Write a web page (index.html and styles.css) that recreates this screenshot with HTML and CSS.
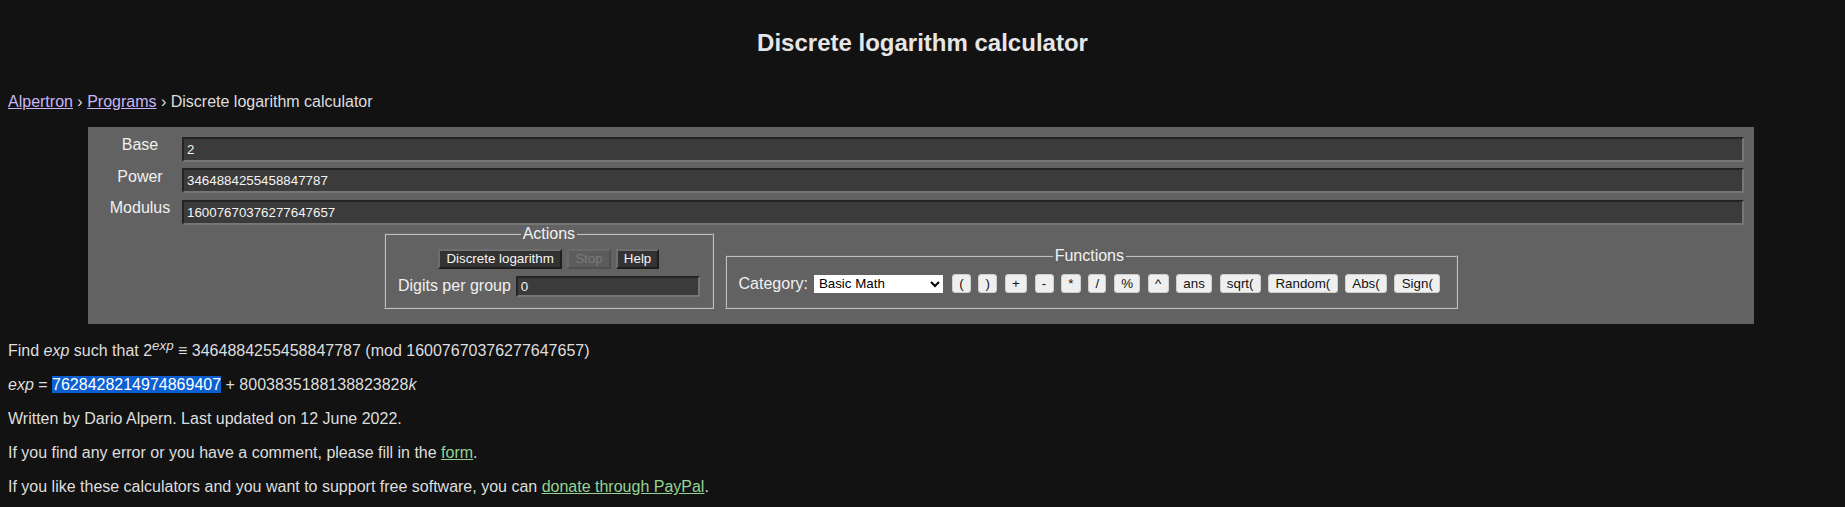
FILE: index.html
```html
<!DOCTYPE html>
<html lang="en">
<head>
<meta charset="utf-8">
<title>Discrete logarithm calculator</title>
<link rel="stylesheet" href="styles.css">
</head>
<body>
<h1 class="title">Discrete logarithm calculator</h1>
<nav class="crumbs"><a href="#">Alpertron</a> › <a href="#">Programs</a> › Discrete logarithm calculator</nav>
<form class="panel">
  <div class="fields">
    <label class="lbl" for="base">Base</label><input class="num" id="base" type="text" value="2">
    <label class="lbl" for="pow">Power</label><input class="num" id="pow" type="text" value="3464884255458847787">
    <label class="lbl" for="mod">Modulus</label><input class="num" id="mod" type="text" value="16007670376277647657">
  </div>
  <div class="boxes">
    <fieldset class="box actions">
      <legend>Actions</legend>
      <div class="act-row">
        <button type="button" class="dark">Discrete logarithm</button>
        <button type="button" class="dark" disabled>Stop</button>
        <button type="button" class="dark">Help</button>
      </div>
      <div class="digits">
        <label for="digits">Digits per group</label><input class="num small" id="digits" type="text" value="0">
      </div>
    </fieldset>
    <fieldset class="box functions">
      <legend>Functions</legend>
      <div class="fn-row">
        <label for="cat">Category:</label>
        <select id="cat" class="cat"><option>Basic Math</option></select>
        <div class="fn-buttons">
          <button type="button" class="fn">(</button>
          <button type="button" class="fn">)</button>
          <button type="button" class="fn">+</button>
          <button type="button" class="fn">-</button>
          <button type="button" class="fn">*</button>
          <button type="button" class="fn">/</button>
          <button type="button" class="fn">%</button>
          <button type="button" class="fn">^</button>
          <button type="button" class="fn">ans</button>
          <button type="button" class="fn">sqrt(</button>
          <button type="button" class="fn">Random(</button>
          <button type="button" class="fn">Abs(</button>
          <button type="button" class="fn">Sign(</button>
        </div>
      </div>
    </fieldset>
  </div>
</form>
<div class="result">
  <p class="first">Find <i>exp</i> such that 2<sup><i>exp</i></sup> ≡ 3464884255458847787 (mod 16007670376277647657)</p>
  <p><i>exp</i> = <span class="sel">7628428214974869407</span> + 8003835188138823828<i>k</i></p>
</div>
<p>Written by Dario Alpern. Last updated on 12 June 2022.</p>
<p>If you find any error or you have a comment, please fill in the <a class="green" href="#">form</a>.</p>
<p>If you like these calculators and you want to support free software, you can <a class="green" href="#">donate through PayPal</a>.</p>
</body>
</html>
```
FILE: styles.css
```css
html, body {
  background: #121212;
}
body {
  margin: 0;
  padding: 29px 8px 0;
  font-family: "Liberation Sans", Arial, sans-serif;
  font-size: 16px;
  color: #dedede;
}
.title {
  margin: 0;
  font-size: 24px;
  line-height: 27px;
  font-weight: bold;
  text-align: center;
  color: #e6e6e6;
}
.crumbs {
  margin-top: 36.5px;
  line-height: 18.4px;
}
.crumbs a {
  color: #c8b6f6;
}
.panel {
  box-sizing: border-box;
  width: 1666px;
  margin: 16px 0 0 80px;
  padding: 10px 10px 14.7px;
  background: #626262;
  color: #f0f0f0;
}
.fields {
  display: grid;
  grid-template-columns: 84px 1fr;
  row-gap: 6.5px;
}
.lbl {
  text-align: center;
  align-self: start;
  line-height: 18.4px;
  margin-top: -0.6px;
}
.num {
  box-sizing: border-box;
  height: 25px;
  margin: 0;
  padding: 0 3px;
  border: 2px solid;
  border-color: #242424 #767676 #767676 #242424;
  background: #3b3b3b;
  color: #f4f4f4;
  font-family: "Liberation Sans", Arial, sans-serif;
  font-size: 13.33px;
}
.num.small {
  width: 184px;
  height: 21px;
}
.boxes {
  display: flex;
  justify-content: center;
  align-items: flex-end;
  gap: 10.7px;
}
.box {
  margin: 0;
  min-width: 0;
  padding: 5.6px 12px 10px;
  border: 2px groove #c0c0c0;
}
.box legend {
  margin: 0 auto;
  padding: 0 2px;
  line-height: 18.4px;
  color: #f2f2f2;
}
.functions {
  padding-right: 16px;
}
.act-row {
  display: flex;
  justify-content: center;
  gap: 5.3px;
  height: 20px;
  margin-bottom: 7px;
}
.dark {
  box-sizing: border-box;
  height: 20px;
  margin: 0;
  padding: 0 6px;
  border: 2px solid;
  border-color: #6e6e6e #1e1e1e #1e1e1e #6e6e6e;
  background: #333333;
  color: #f6f6f6;
  font-family: "Liberation Sans", Arial, sans-serif;
  font-size: 13.33px;
}
.dark:disabled {
  background: #5c5c5c;
  color: #7a7a7a;
  border-color: #6a6a6a #505050 #505050 #6a6a6a;
}
.digits {
  display: flex;
  align-items: center;
  gap: 5px;
  height: 21px;
}
.fn-row {
  display: flex;
  align-items: center;
  height: 26.3px;
}
.cat {
  box-sizing: border-box;
  width: 129.3px;
  height: 18px;
  margin: 0 8.7px 0 6px;
  padding: 0 0 0 1px;
  border: 0;
  background: #ffffff;
  color: #000;
  font-family: "Liberation Sans", Arial, sans-serif;
  font-size: 13.33px;
}
.fn-buttons {
  display: flex;
  gap: 7.5px;
}
.fn {
  box-sizing: border-box;
  height: 19.3px;
  margin: 0;
  padding: 0 6.25px;
  border: 1px solid #cfcfcf;
  border-radius: 3px;
  background: #efefef;
  color: #111;
  font-family: "Liberation Sans", Arial, sans-serif;
  font-size: 13.33px;
}
p {
  margin: 16px 0;
}
.result .first {
  margin-top: 18.5px;
}
sup {
  font-size: 13.33px;
  line-height: 0;
}
.sel {
  background: #0b5fd1;
  color: #fff;
}
a.green {
  color: #96d296;
}
```
